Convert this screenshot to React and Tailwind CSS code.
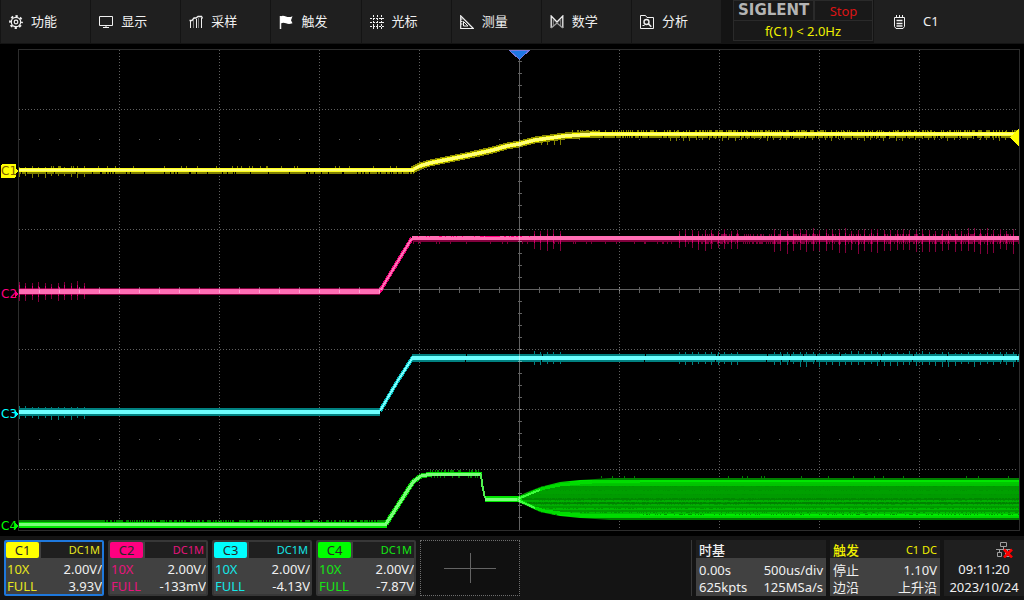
import React from 'react';

const LEFT = 19;
const RIGHT = 1019;

const channels = [
  {
    name: 'C1', coupling: 'DC1M', probe: '10X', bandwidth: 'FULL', scale: '2.00V/', offset: '3.93V',
    chip: 'bg-[#ffff00]', text: 'text-[#e6e61e]', border: 'border-[#1e78dc]', active: true,
  },
  {
    name: 'C2', coupling: 'DC1M', probe: '10X', bandwidth: 'FULL', scale: '2.00V/', offset: '-133mV',
    chip: 'bg-[#ff0080]', text: 'text-[#e6147d]', border: 'border-[#373737]', active: false,
  },
  {
    name: 'C3', coupling: 'DC1M', probe: '10X', bandwidth: 'FULL', scale: '2.00V/', offset: '-4.13V',
    chip: 'bg-[#00ffff]', text: 'text-[#14e6e6]', border: 'border-[#373737]', active: false,
  },
  {
    name: 'C4', coupling: 'DC1M', probe: '10X', bandwidth: 'FULL', scale: '2.00V/', offset: '-7.87V',
    chip: 'bg-[#00ff00]', text: 'text-[#14e614]', border: 'border-[#373737]', active: false,
  },
];

const Icon = ({ children, width = 14 }) => (
  <svg
    width={width}
    height="14"
    viewBox={`0 0 ${width} 14`}
    fill="none"
    stroke="#f0f0f0"
    strokeWidth="1"
    className="shrink-0"
    aria-hidden="true"
  >
    {children}
  </svg>
);

const GearIcon = () => (
  <Icon>
    <circle cx="7" cy="7" r="4.700" strokeWidth="1.200" />
    <circle cx="7" cy="7" r="6" strokeWidth="1.800" strokeDasharray="2.350 2.362" strokeDashoffset="1.200" />
    <circle cx="7" cy="7" r="1.800" strokeWidth="1.200" />
  </Icon>
);

const MonitorIcon = () => (
  <Icon>
    <path d="M.5 1.500h13v9H.5zM7 10.500v2M4 12.500h6" />
  </Icon>
);

const SampleIcon = () => (
  <Icon>
    <path d="M1.500 13V6M7.500 13V4M12.500 13V3" />
    <path d="M4.500 13V5M9.500 13V3" stroke="#787878" />
    <path d="M.5 5.500h2.500L5 3h2l2-1.500h3.500l1 2" strokeWidth="1.300" />
  </Icon>
);

const FlagIcon = () => (
  <Icon>
    <path d="M1.500 1v13" strokeWidth="1.500" />
    <path d="M1.500 1.500c2-1.400 3.500-.8 5.500 0s4 .8 6.500-.3l-1.500 4 1.500 3c-3 1-4.500.8-6.500 0s-3.500-.8-5.500.3z" fill="#fff" stroke="none" />
  </Icon>
);

const CursorIcon = () => (
  <Icon>
    <path d="M3.500 0v14M7.500 0v14M11.500 0v14" strokeDasharray="2 1" />
    <path d="M0 3.500h14M0 7.500h14M0 11.500h14" strokeDasharray="2 1" />
  </Icon>
);

const MeasureIcon = () => (
  <Icon>
    <path d="M.7 .8v12.700H13.300z" strokeWidth="1.200" />
    <path d="M3.500 6.500v4.500h4.500z" />
    <path d="M1 4h1.500M1 6.500h1.500M1 9h1.500" />
  </Icon>
);

const MathIcon = () => (
  <Icon>
    <path d="M1.200 13V1L7 7l5.800-6v12" strokeWidth="1.300" />
    <path d="M3.300 11.500v-7L7 8.300l3.700-3.800v7" stroke="#8c8c8c" />
    <path d="M1.200 13 7 8l5.800 5" strokeWidth="1.300" stroke="#a0a0a0" />
  </Icon>
);

const AnalysisIcon = () => (
  <Icon>
    <path d="M.5 13.500v-13h5l1.500 2h6.500v11z" />
    <circle cx="6.500" cy="7" r="2.500" strokeWidth="1.400" />
    <path d="M8.300 8.800l3 3" strokeWidth="1.600" />
    <path d="M2.500 10.500h2" />
  </Icon>
);

const NoteIcon = () => (
  <Icon width={11}>
    <path d="M.5 2.500h10v9l-1.500 2H2l-1.500-2z" />
    <path d="M2.500 0v3M5.500 0v3M8.500 0v3" />
    <path d="M2.500 5.500h6M2.500 8.500h6M2.500 11h6" strokeWidth="1.400" />
  </Icon>
);

const NetworkIcon = () => (
  <svg width="17" height="16" viewBox="0 0 17 16" fill="none" stroke="#a0a0a0" role="img" aria-label="网络未连接">
    <path d="M4.500.5h6v4h-6zM7.500 4.500v3M0 7.500h15M3.500 7.500v3M11.500 7.500v3M1.500 10.500h4v4h-4zM9.500 10.500h4v4h-4z" />
    <path d="M8 7.500l8 8M16 7.500l-8 8" stroke="#ff0000" strokeWidth="2.500" />
  </svg>
);

const menu = [
  { label: '功能', icon: GearIcon },
  { label: '显示', icon: MonitorIcon },
  { label: '采样', icon: SampleIcon },
  { label: '触发', icon: FlagIcon },
  { label: '光标', icon: CursorIcon },
  { label: '测量', icon: MeasureIcon },
  { label: '数学', icon: MathIcon },
  { label: '分析', icon: AnalysisIcon },
];

// Repeatable noise, so a trace looks the same on every render
const noise = (n) => {
  const v = Math.sin(n * 127.1 + 11.7) * 43758.5453;
  return v - Math.floor(v);
};

// Horizontal run with random gaps; density is the share that stays filled
const ragged = (x1, x2, y, h, density, seed) => {
  let d = '';
  for (let x = x1; x < x2; x += 1) {
    if (noise(x + seed) < density) d += `M${x} ${y}h1v${h}h-1z`;
  }
  return d;
};

// Periodic switching spikes around a level
const spikes = (x1, x2, y, up, down, seed) => {
  let d = '';
  for (let i = 0; x1 + i * 6.45 < x2; i += 1) {
    const x = Math.round(x1 + i * 6.45);
    const u = Math.round(up * (0.7 + noise(i + seed) * 0.3));
    const b = Math.round(down * (0.7 + noise(i * 3 + seed) * 0.3));
    d += `M${x} ${y - u}h1v${u + b}h-1z`;
  }
  return d;
};

const Grid = () => {
  const columns = [119, 219, 319, 419, 619, 719, 819, 919];
  const rows = [109, 169, 229, 349, 409, 469];
  return (
    <g stroke="#606060">
      {columns.map((x) => (
        <path key={x} d={`M${x + 0.5} 50V529`} strokeDasharray="1 2" />
      ))}
      {rows.map((y) => (
        <path key={y} d={`M19 ${y + 0.5}H1017`} strokeDasharray="1 2" />
      ))}
      <path d="M19 139.500H1017M19 439.500H1017" strokeDasharray="1 19" />
      <path d="M18.500 49.500H1019.500V530.500H18.500z" fill="none" stroke="#2d2d2d" />
    </g>
  );
};

const Axes = () => {
  let ticks = '';
  for (let x = 39; x < RIGHT; x += 20) ticks += `M${x} 287h1v6h-1z`;
  for (let y = 61; y < 529; y += 12) ticks += `M518 ${y}h4v1h-4z`;
  return (
    <g fill="#ffffff" opacity="0.38">
      <path d="M19 289h1000v1H19zM519 59h1v471h-1z" />
      <path d={ticks} />
    </g>
  );
};

const C1_RISE = '412,170 420,166 430,163 450,159 470,155 493,150 507,146 519,144 535,140 550,138 565,136 580,135 600,134';

const TraceC1 = () => (
  <g>
    <g fill="#808000">
      <path d={ragged(LEFT, 414, 172, 2, 0.85, 3)} />
      <path d={ragged(LEFT, 414, 166, 2, 0.08, 8)} />
      <path d={spikes(LEFT, 86, 170, 4, 8, 2)} />
      <path d={ragged(570, RIGHT, 130, 2, 0.4, 5)} />
      <path d={ragged(590, RIGHT, 136, 2, 0.8, 6)} />
      <path d={spikes(541, 565, 139, 4, 7, 9)} />
      <path d={spikes(670, RIGHT, 134, 4, 7, 4)} />
    </g>
    <polyline points={C1_RISE} fill="none" stroke="#8c8c00" strokeWidth="7" />
    <polyline points={C1_RISE} fill="none" stroke="#ffff00" strokeWidth="4" />
    <polyline points={C1_RISE} fill="none" stroke="#ffff78" strokeWidth="3" />
    <path d="M19 168H414V172H19zM590 132H1019V136H590z" fill="#ffff1e" />
    <path d="M19 169H414V171H19zM590 133H1019V135H590z" fill="#ffff78" />
  </g>
);

const TraceC2 = () => (
  <g>
    <g fill="#80003c">
      <path d="M19 288H380V295H19zM413 240H1019V242H413z" />
      <path d={ragged(413, RIGHT, 242, 2, 0.08, 12)} />
      <path d={ragged(700, RIGHT, 234, 2, 0.35, 13)} />
      <path d={ragged(700, RIGHT, 242, 2, 0.4, 14)} />
      <path d={spikes(LEFT, 86, 291, 10, 11, 15)} />
      <path d={spikes(534, 562, 238, 9, 14, 16)} />
      <path d={spikes(679, 738, 238, 9, 13, 17)} />
      <path d={spikes(774, RIGHT, 238, 10, 16, 18)} />
    </g>
    <g fill="#d2006e">
      <path d={spikes(LEFT, 86, 291, 6, 6, 15)} />
      <path d={spikes(534, 562, 238, 5, 6, 16)} />
      <path d={spikes(679, 738, 238, 5, 6, 17)} />
      <path d={spikes(774, RIGHT, 238, 5, 7, 18)} />
    </g>
    <polyline points="380,291 412,238" fill="none" stroke="#e60073" strokeWidth="4" />
    <polyline points="380,291 412,238" fill="none" stroke="#ff6eb4" strokeWidth="2" />
    <path d="M19 289H381V293H19z" fill="#ff0080" />
    <path d="M19 290H380V294H19zM412 236H1019V240H412z" fill="#ff6eb4" />
    <path d={`${ragged(480, 500, 236, 1, 0.9, 21)}${ragged(415, 530, 236, 1, 0.3, 22)}`} fill="#ff0080" />
  </g>
);

const TraceC3 = () => (
  <g>
    <g fill="#008080">
      <path d="M19 408H380V416H19z" />
      <path d={ragged(412, RIGHT, 354, 2, 0.96, 31)} />
      <path d={ragged(412, RIGHT, 360, 2, 0.96, 32)} />
      <path d={spikes(LEFT, 86, 411, 5, 9, 33)} />
      <path d={spikes(534, 562, 357, 6, 9, 34)} />
      <path d={spikes(679, 738, 357, 6, 9, 35)} />
      <path d={spikes(774, RIGHT, 357, 6, 10, 36)} />
    </g>
    <polyline points="380,411 397,382 413,357" fill="none" stroke="#00b4b4" strokeWidth="4" />
    <polyline points="380,411 397,382 413,357" fill="none" stroke="#78ffff" strokeWidth="2" />
    <path d="M19 410H380V414H19zM412 356H1019V360H412z" fill="#6effff" />
  </g>
);

// Brightness rows of the oscillating part of C4: [y, height, colour]
const BURST_ROWS = [
  [478, 2, '#008000'], [480, 2, '#00e600'], [482, 2, '#00c800'], [484, 2, '#00c300'],
  [486, 4, '#009b00'], [490, 4, '#00a000'], [494, 4, '#009b00'], [498, 2, '#008700'],
  [500, 2, '#00af00'], [502, 2, '#008200'], [504, 2, '#00af00'], [506, 2, '#009b00'],
  [508, 2, '#00b900'], [510, 2, '#009b00'], [512, 2, '#00be00'], [514, 2, '#00eb00'],
  [516, 2, '#00d700'], [518, 2, '#007800'],
];
const BURST_TOP = '515,499 525,496 535,491 545,488 560,485 580,483 605,481 640,481';
const BURST_BOTTOM = '515,499 525,503 535,508 545,511 560,513 580,515 605,515 640,516';

const TraceC4 = () => (
  <g>
    <defs>
      <clipPath id="burst">
        <path d="M515 498 525 493 540 487 560 482 580 480 610 478H1019V520H610L580 518 560 516 540 512 525 505 515 501z" />
      </clipPath>
    </defs>
    <g fill="#008200">
      <path d={ragged(LEFT, 104, 520, 2, 1, 41)} />
      <path d={ragged(104, 387, 520, 2, 0.6, 42)} />
      <path d={ragged(430, 481, 470, 2, 0.6, 43)} />
      <path d={ragged(430, 481, 476, 2, 0.4, 44)} />
      <path d={ragged(590, RIGHT, 476, 2, 0.05, 45)} />
    </g>
    <g clipPath="url(#burst)">
      {BURST_ROWS.map(([y, h, colour]) => (
        <rect key={y} x="515" y={y} width="504" height={h} fill={colour} />
      ))}
      {BURST_ROWS.slice(4, 16).map(([y], i) => (
        <path key={y} d={ragged(530, RIGHT, y, 1, 0.35, 50 + i * 7)} fill="#009600" />
      ))}
      <polyline points={BURST_TOP} fill="none" stroke="#00dc00" strokeWidth="3" />
      <polyline points={BURST_BOTTOM} fill="none" stroke="#00dc00" strokeWidth="3" />
    </g>
    <polyline points="386,524 413,482 421,476 432,474" fill="none" stroke="#00c800" strokeWidth="5" />
    <path d="M19 522H387V528H19zM428 472H482V476H428zM485 496H522V502H485z" fill="#00e600" />
    <polyline
      points="19,524 386,524 413,482 421,476 432,474 481,474"
      fill="none"
      stroke="#78ff78"
      strokeWidth="3"
    />
    <polyline points="481,474 482,484 485,498" fill="none" stroke="#50f050" strokeWidth="2" />
    <path d="M485 498H519V501H485z" fill="#78ff78" />
    <path d="M517 499 540 490M517 500 535 508" stroke="#3cff3c" strokeWidth="2" />
  </g>
);

const Markers = () => (
  <g fontFamily="'DejaVu Sans', sans-serif" fontSize="12">
    <rect x="1" y="164" width="15" height="14" rx="2" fill="#ffff00" />
    <path d="M15 168l3 3-3 3z" fill="#ffff00" />
    <text x="1" y="175" fill="#7d5a00">C1</text>
    <text x="1" y="298" fill="#ff0080">C2</text>
    <path d="M15 291l3 3-3 3z" fill="#ff0080" />
    <text x="1" y="418" fill="#00ffff">C3</text>
    <path d="M15 411l3 3-3 3z" fill="#00ffff" />
    <text x="1" y="530" fill="#00ff00">C4</text>
    <path d="M15 523l3 3-3 3z" fill="#00ff00" />
    <path d="M509.500 50.500H529L519.500 59.500z" fill="#1e78e6" stroke="#7878dc" />
    <path d="M1019 129V146L1010 137.500z" fill="#ffff00" />
  </g>
);

const Waveforms = () => (
  <svg
    viewBox="0 44 1024 492"
    className="block h-auto w-full bg-black"
    shapeRendering="crispEdges"
    role="img"
    aria-label="示波器波形"
  >
    <Grid />
    <TraceC4 />
    <TraceC3 />
    <TraceC2 />
    <TraceC1 />
    <Axes />
    <Markers />
  </svg>
);

const Header = () => (
  <header className="flex h-11 bg-[#141414] pb-px">
    <nav className="grid flex-1 grid-cols-8">
      {menu.map(({ label, icon: MenuIcon }) => (
        <button
          key={label}
          type="button"
          className="flex items-center gap-2 border-l border-[#141414] bg-[#1f1f1f] pl-2 text-left"
        >
          <MenuIcon />
          {label}
        </button>
      ))}
    </nav>
    <div className="ml-3 h-[41px] w-[140px] border border-[#2a2a2a] bg-[#191919]">
      <div className="flex h-5 border-b border-[#2a2a2a]">
        <div className="w-[79px] pl-1 font-['DejaVu_Sans',sans-serif] text-[15px] leading-[18px] font-bold text-[#b4b4b4]">
          SIGLENT
        </div>
        <div className="flex-1 border-l-2 border-[#2a2a2a] text-center leading-5 text-[#dc1414]">Stop</div>
      </div>
      <div className="text-center leading-5 text-[#f0f000]">f(C1) &lt; 2.0Hz</div>
    </div>
    <button type="button" className="ml-px flex w-[150px] items-center gap-[18px] bg-[#1f1f1f] pl-5">
      <NoteIcon />
      C1
    </button>
  </header>
);

const ChannelCard = ({ channel }) => (
  <button
    type="button"
    aria-pressed={channel.active}
    className={`flex h-14 w-[100px] flex-col overflow-hidden rounded-xs border-2 bg-[#414141] ${channel.border}`}
  >
    <span className="flex h-4 w-full shrink-0 gap-0.5">
      <span className={`w-[33px] rounded-xs text-center leading-[17px] text-[#282828] ${channel.chip}`}>
        {channel.name}
      </span>
      <span className={`flex-1 bg-[#1f1f1f] pr-0.5 text-right text-[11px] leading-4 ${channel.text}`}>
        {channel.coupling}
      </span>
    </span>
    <span className="flex w-full flex-1 flex-col justify-end gap-px pl-px leading-4">
      <span className="flex justify-between">
        <span className={channel.text}>{channel.probe}</span>
        {channel.scale}
      </span>
      <span className="flex justify-between">
        <span className={channel.text}>{channel.bandwidth}</span>
        {channel.offset}
      </span>
    </span>
  </button>
);

const Footer = () => (
  <footer className="flex h-16 gap-1 bg-[#141414] py-1 pl-1">
    {channels.map((channel) => (
      <ChannelCard key={channel.name} channel={channel} />
    ))}
    <button
      type="button"
      aria-label="添加通道"
      className="flex h-14 w-[100px] items-center justify-center border border-dotted border-[#6e6e6e] bg-[#101010]"
    >
      <svg width="52" height="30" viewBox="0 0 52 30" stroke="#646464" shapeRendering="crispEdges">
        <path d="M0 15.500h52M26.500 0v30" />
      </svg>
    </button>
    <div className="ml-auto w-px bg-[#373737]" />
    <button type="button" className="flex h-14 w-[130px] flex-col bg-[#414141] text-left">
      <span className="h-[18px] w-full bg-[#1f1f1f] pl-[3px] leading-5 font-medium">时基</span>
      <span className="flex w-full flex-1 flex-col justify-end px-[3px] leading-[17px]">
        <span className="flex justify-between">
          <span>0.00s</span>
          <span>500us/div</span>
        </span>
        <span className="flex justify-between">
          <span>625kpts</span>
          <span>125MSa/s</span>
        </span>
      </span>
    </button>
    <button type="button" className="flex h-14 w-[110px] flex-col bg-[#414141] text-left">
      <span className="flex h-[18px] w-full justify-between bg-[#1f1f1f] px-[3px] leading-5 text-[#f0f000]">
        <span className="font-medium">触发</span>
        <span className="text-[11px]">C1 DC</span>
      </span>
      <span className="flex w-full flex-1 flex-col justify-end px-[3px] leading-[17px]">
        <span className="flex justify-between">
          <span>停止</span>
          <span>1.10V</span>
        </span>
        <span className="flex justify-between">
          <span>边沿</span>
          <span>上升沿</span>
        </span>
      </span>
    </button>
    <div className="flex w-20 flex-col items-center bg-[#1f1f1f] pt-0.5">
      <div className="mb-0.5 w-full pl-[52px]">
        <NetworkIcon />
      </div>
      <time className="leading-[18px]">09:11:20</time>
      <time className="leading-[18px]">2023/10/24</time>
    </div>
  </footer>
);

const App = () => (
  <div className="flex min-h-screen flex-col bg-black font-['Noto_Sans','Noto_Sans_CJK_SC',sans-serif] text-[13px] text-[#f0f0f0]">
    <Header />
    <Waveforms />
    <Footer />
  </div>
);

export default App;
